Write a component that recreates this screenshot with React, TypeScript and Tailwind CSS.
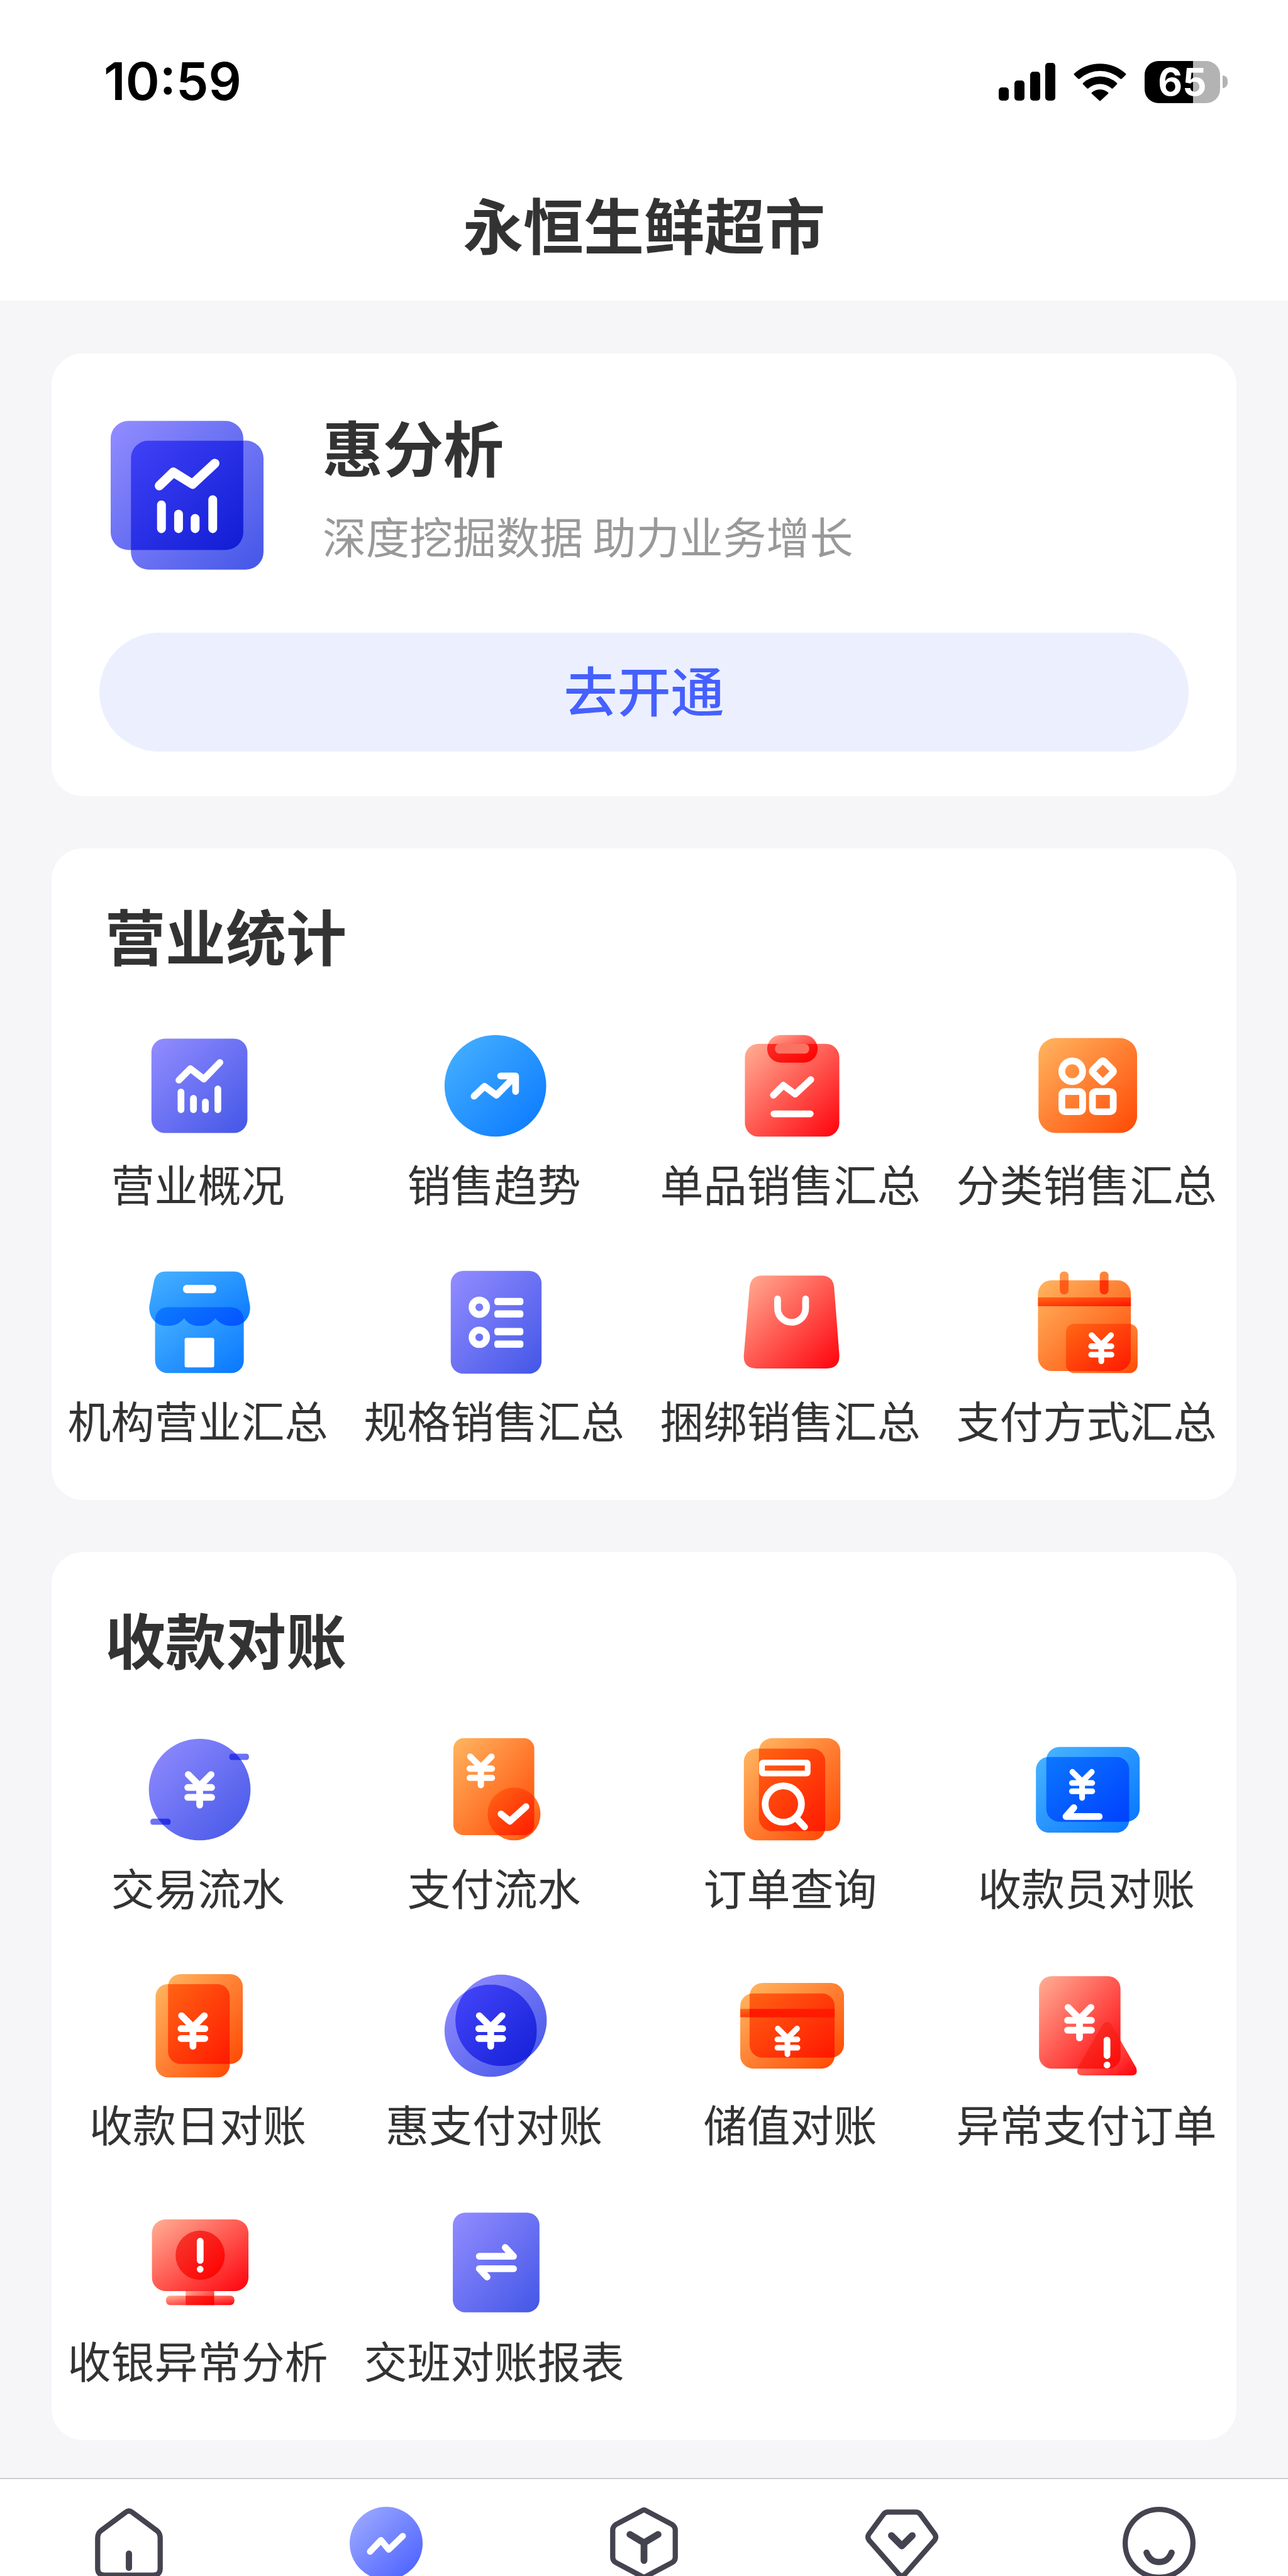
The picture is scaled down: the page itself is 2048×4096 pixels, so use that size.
import type { ReactNode } from "react";

type Tone = "purple" | "blue" | "orange" | "red";

const gradients = [
  { id: "purple", from: "#8f8afe", to: "#4759e8" },
  { id: "blue", from: "#45b0ff", to: "#0b7aff" },
  { id: "orange", from: "#ffb05c", to: "#ff4e08" },
  { id: "red", from: "#ffa78f", to: "#ff0a12" },
  { id: "purple-deep", from: "#4646fa", to: "#131fd6" },
  { id: "blue-deep", from: "#0c78ff", to: "#0040ff" },
  { id: "orange-deep", from: "#ff6414", to: "#ff1700" },
  { id: "red-deep", from: "#f5382e", to: "#ff0000" },
  { id: "tab", from: "#9eabff", to: "#4a60ff" },
];

const GradientDefs = () => (
  <svg width="0" height="0" className="absolute" aria-hidden="true">
    <defs>
      {gradients.map((g) => (
        <linearGradient key={g.id} id={g.id} x1="0" y1="0" x2="1" y2="1">
          <stop offset="0.05" stopColor={g.from} />
          <stop offset="0.95" stopColor={g.to} />
        </linearGradient>
      ))}
    </defs>
  </svg>
);

const Icon = ({ children }: { children: ReactNode }) => (
  <svg viewBox="0 0 200 200" className="w-[165px] h-[165px] overflow-visible" fill="none" aria-hidden="true">
    {children}
  </svg>
);

const White = ({ d, w = 13 }: { d: string; w?: number }) => (
  <path d={d} stroke="#fff" strokeWidth={w} strokeLinecap="round" strokeLinejoin="round" />
);

// x is the middle of the sign, y its top edge
const Yen = ({ x, y, s = 1 }: { x: number; y: number; s?: number }) => (
  <g transform={`translate(${x} ${y}) scale(${s})`}>
    <White d="M-22 7 0 29 22 7M0 29V66M-23 32H23M-23 51H23" />
  </g>
);

// two stacked shapes, with the part they share in the deep tone
const Duo = ({ id, tone, back, front }: { id: string; tone: Tone; back: string; front: string }) => (
  <>
    <clipPath id={id}>
      <path d={front} />
    </clipPath>
    <path d={back} fill={`url(#${tone})`} />
    <path d={front} fill={`url(#${tone})`} />
    <path d={back} fill={`url(#${tone}-deep)`} clipPath={`url(#${id})`} />
  </>
);

const box = (x: number, y: number, w: number, h: number, r: number) =>
  `M${x + r} ${y}h${w - 2 * r}a${r} ${r} 0 0 1 ${r} ${r}v${h - 2 * r}a${r} ${r} 0 0 1 ${-r} ${r}h${2 * r - w}a${r} ${r} 0 0 1 ${-r} ${-r}v${2 * r - h}a${r} ${r} 0 0 1 ${r} ${-r}z`;

const disc = (cx: number, cy: number, r: number) =>
  `M${cx - r} ${cy}a${r} ${r} 0 1 1 ${2 * r} 0a${r} ${r} 0 1 1 ${-2 * r} 0z`;

const businessItems = [
  {
    name: "营业概况",
    icon: (
      <Icon>
        <path d={box(7, 9, 185, 182, 26)} fill="url(#purple)" />
        <White d="M60 89 82 67 108 87 139 55" />
        <White d="M64 112V146M88 124V146M111 131V146M135 106V146" />
      </Icon>
    ),
  },
  {
    name: "销售趋势",
    icon: (
      <Icon>
        <circle cx="99" cy="100" r="98" fill="url(#blue)" />
        <White d="M58 120 78 101 101 118 138 81M109 81H138V111" />
      </Icon>
    ),
  },
  {
    name: "单品销售汇总",
    icon: (
      <Icon>
        <path d={box(9, 19, 182, 179, 26)} fill="url(#red)" />
        <clipPath id="clipboard">
          <path d={box(9, 19, 182, 179, 26)} />
        </clipPath>
        <path d={box(52, 2, 97, 53, 26)} fill="url(#red)" />
        <path
          d={box(52, 2, 97, 53, 26)}
          fill="url(#red-deep)"
          clipPath="url(#clipboard)"
        />
        <path d={box(67, 19, 66, 19, 9)} fill="#fb7263" />
        <White d="M64 118 83 99 106 116 136 88M65 154H135" />
      </Icon>
    ),
  },
  {
    name: "分类销售汇总",
    icon: (
      <Icon>
        <path d={box(4, 8, 190, 183, 33)} fill="url(#orange)" />
        <g stroke="#fff" strokeWidth="13" strokeLinejoin="round">
          <circle cx="69" cy="72" r="20" />
          <path d="M125 53Q128 50 131 53L147 69Q150 72 147 75L131 91Q128 94 125 91L109 75Q106 72 109 69Z" />
          <rect x="49" y="111" width="40" height="39" rx="6" />
          <rect x="108" y="111" width="40" height="39" rx="6" />
        </g>
      </Icon>
    ),
  },
  {
    name: "机构营业汇总",
    icon: (
      <Icon>
        <Duo
          id="store"
          tone="blue"
          back={box(14, 71, 171, 127, 24)}
          front="M34 2H166Q184 2 188 21L197 68C199 92 183 107 163 107Q142 107 130 92Q120 107 100 107Q80 107 70 92Q58 107 37 107C17 107 1 92 3 68L12 21Q16 2 34 2Z"
        />
        <rect x="68" y="28" width="64" height="16" rx="7" fill="#fff" />
        <rect x="71" y="130" width="57" height="57" rx="4" fill="#fff" />
      </Icon>
    ),
  },
  {
    name: "规格销售汇总",
    icon: (
      <Icon>
        <path d={box(13, 1, 175, 198, 24)} fill="url(#purple)" />
        <circle cx="68" cy="71" r="14" stroke="#fff" strokeWidth="13" />
        <circle cx="68" cy="129" r="14" stroke="#fff" strokeWidth="13" />
        <g fill="#fff">
          <rect x="97" y="53" width="56" height="14" rx="5" />
          <rect x="97" y="77" width="56" height="14" rx="5" />
          <rect x="97" y="111" width="56" height="14" rx="5" />
          <rect x="97" y="135" width="56" height="14" rx="5" />
        </g>
      </Icon>
    ),
  },
  {
    name: "捆绑销售汇总",
    icon: (
      <Icon>
        <path
          d="M42 10H156Q179 10 181 33L191 163Q192 189 166 189H32Q5 189 7 163L18 33Q20 10 42 10Z"
          fill="url(#red)"
        />
        <White d="M72 55V73A27 27 0 0 0 126 73V55" />
      </Icon>
    ),
  },
  {
    name: "支付方式汇总",
    icon: (
      <Icon>
        <path d={box(45, 2, 17, 44, 8)} fill="#ff994b" />
        <path d={box(122, 2, 17, 44, 8)} fill="#ff8238" />
        <Duo id="calendar" tone="orange" back={box(57, 103, 138, 95, 16)} front={box(3, 19, 179, 175, 26)} />
        <rect x="3" y="52" width="179" height="17" fill="url(#orange-deep)" />
        <path d="M45 19H62V38A8 8 0 0 1 45 38Z" fill="#ff5c18" />
        <path d="M122 19H139V38A8 8 0 0 1 122 38Z" fill="#ff3208" />
        <Yen x={125} y={119} s={0.85} />
      </Icon>
    ),
  },
];

const paymentItems = [
  {
    name: "交易流水",
    icon: (
      <Icon>
        <Duo
          id="flow"
          tone="purple"
          back={box(157, 31, 38, 12, 5) + box(5, 156, 39, 12, 5)}
          front={disc(100, 100, 98)}
        />
        <Yen x={100} y={64} />
      </Icon>
    ),
  },
  {
    name: "支付流水",
    icon: (
      <Icon>
        <Duo id="pay-flow" tone="orange" back={disc(135, 147, 51)} front={box(18, 1, 156, 187, 20)} />
        <Yen x={71} y={30} s={0.93} />
        <White d="M110 147 127 161 158 133" />
      </Icon>
    ),
  },
  {
    name: "订单查询",
    icon: (
      <Icon>
        <Duo id="order" tone="orange" back={box(36, 1, 157, 179, 25)} front={box(7, 21, 157, 177, 25)} />
        <rect x="42" y="48" width="88" height="21" rx="2" stroke="#fff" strokeWidth="11" />
        <circle cx="83" cy="128" r="35" stroke="#fff" strokeWidth="13" />
        <White d="M109 156 124 172" />
      </Icon>
    ),
  },
  {
    name: "收款员对账",
    icon: (
      <Icon>
        <Duo id="cashier" tone="blue" back={box(19, 18, 180, 144, 25)} front={box(-1, 37, 180, 146, 25)} />
        <Yen x={88} y={60} s={0.85} />
        <White d="M72 135 57 152H121" />
      </Icon>
    ),
  },
  {
    name: "收款日对账",
    icon: (
      <Icon>
        <Duo id="daily" tone="orange" back={box(39, 0, 144, 173, 24)} front={box(15, 19, 143, 180, 24)} />
        <Yen x={87} y={73} />
      </Icon>
    ),
  },
  {
    name: "惠支付对账",
    icon: (
      <Icon>
        <Duo id="hui-pay" tone="purple" back={disc(110, 89, 88)} front={disc(90, 109, 89)} />
        <Yen x={90} y={73} />
      </Icon>
    ),
  },
  {
    name: "储值对账",
    icon: (
      <Icon>
        <Duo id="stored" tone="orange" back={box(18, 17, 182, 144, 25)} front={box(0, 37, 182, 145, 25)} />
        <rect x="0" y="67" width="182" height="16" fill="url(#orange-deep)" />
        <rect x="18" y="67" width="164" height="16" fill="#ff1a00" />
        <Yen x={91} y={99} s={0.84} />
      </Icon>
    ),
  },
  {
    name: "异常支付订单",
    icon: (
      <Icon>
        <Duo
          id="abnormal"
          tone="red"
          back="M127 98Q136 86 145 98L192 180Q197 195 184 195H88Q75 195 80 180Z"
          front={box(5, 4, 157, 178, 24)}
        />
        <Yen x={83} y={57} />
        <White d="M136 127V157M136 175V175.1" />
      </Icon>
    ),
  },
  {
    name: "收银异常分析",
    icon: (
      <Icon>
        <path d={box(8, 17, 186, 138, 26)} fill="url(#red)" />
        <circle cx="101" cy="86" r="47.5" fill="url(#red-deep)" />
        <Duo id="stand" tone="red" back={box(73, 155, 55, 27, 0)} front={box(35, 164, 132, 18, 8)} />
        <White d="M101 59V96M101 113V113.1" />
      </Icon>
    ),
  },
  {
    name: "交班对账报表",
    icon: (
      <Icon>
        <path d={box(17, 4, 167, 192, 24)} fill="url(#purple)" />
        <White d="M68 88H134L118 71M134 112H68L83 128" />
      </Icon>
    ),
  },
];

const tabs = [
  {
    name: "首页",
    icon: (
      <>
        <path d="M63 11Q70 5 77 11L124 46Q130 51 130 60V118Q130 131 117 131H23Q10 131 10 118V60Q10 51 16 46Z" />
        <path d="M70 90V117" strokeWidth="12" />
      </>
    ),
  },
  {
    name: "报表",
    icon: (
      <>
        <circle cx="70" cy="70" r="70" fill="url(#tab)" stroke="none" />
        <path d="M39 86 60 64 75 82 102 56" stroke="#fff" strokeWidth="12" />
      </>
    ),
  },
  {
    name: "商品",
    icon: (
      <>
        <path d="M65 8Q70 4 75 8L124 34Q130 38 130 45V97Q130 104 124 107L75 133Q70 136 65 133L16 107Q10 104 10 97V45Q10 38 16 34Z" />
        <path d="M43 53 70 69 97 53M70 69V103" strokeWidth="13" />
      </>
    ),
  },
  {
    name: "会员",
    icon: (
      <>
        <path d="M43 10H97Q102 10 105 14L133 52Q137 58 133 64L76 129Q70 135 64 129L7 64Q3 58 7 52L35 14Q38 10 43 10Z" />
        <path d="M50 55 70 75 90 55" strokeWidth="13" />
      </>
    ),
  },
  {
    name: "我的",
    icon: (
      <>
        <circle cx="70" cy="70" r="65" />
        <path d="M46 88Q53 106 70 106Q87 106 94 88" strokeWidth="12" />
      </>
    ),
  },
];

const StatusBar = () => (
  <div className="flex items-center justify-between h-[260px] pl-[165px] pr-[96px] text-black font-['Inter',sans-serif]">
    <span className="text-[82px] leading-[100px] font-semibold">10:59</span>
    <div className="flex items-center">
      <svg viewBox="0 0 90 60" className="w-[90px] h-[60px]" aria-hidden="true">
        <rect x="0" y="39" width="16" height="21" rx="5" />
        <rect x="25" y="28" width="16" height="32" rx="5" />
        <rect x="50" y="14" width="16" height="46" rx="5" />
        <rect x="74" y="0" width="16" height="60" rx="5" />
      </svg>
      <svg viewBox="0 0 84 62" className="w-[84px] h-[62px] ml-[29px]" aria-hidden="true">
        <path d="M1 18A61 61 0 0 1 83 18Q84 19 83 20L77 26Q75 27 74 26A48 48 0 0 0 10 26Q9 27 7 26L1 20Q0 19 1 18Z" />
        <path d="M15 33A40 40 0 0 1 69 33Q70 34 69 35L63 41Q61 43 60 41A28 28 0 0 0 24 41Q23 43 21 41L15 35Q14 34 15 33Z" />
        <path d="M29 48A20 20 0 0 1 55 48Q56 49 55 50L43 61Q42 62 41 61L29 50Q28 49 29 48Z" />
      </svg>
      <div className="flex items-center justify-center w-[120px] h-[67px] ml-[29px] rounded-[22px] bg-[linear-gradient(90deg,#000_64%,#b3b3b3_64%)]">
        <span className="text-[60px] leading-[67px] font-bold text-white">65</span>
      </div>
      <div className="w-2 h-[20px] ml-1 rounded-r-full bg-[#b3b3b3]"></div>
    </div>
  </div>
);

const Section = ({ title, items }: { title: string; items: { name: string; icon: ReactNode }[] }) => (
  <section className="bg-white rounded-[50px] pt-[89px] pb-[78px]">
    <h2 className="pl-[85px] text-[96px] leading-[96px] font-bold">{title}</h2>
    <ul className="grid grid-cols-4 gap-y-[89px] mt-[110px]">
      {items.map((item) => (
        <li key={item.name}>
          <a href="#" className="flex flex-col items-center gap-[22px]">
            {item.icon}
            <span className="pr-[6px] text-[69px] leading-[100px] whitespace-nowrap">{item.name}</span>
          </a>
        </li>
      ))}
    </ul>
  </section>
);

const App = () => {
  return (
    <div className="flex flex-col min-h-screen bg-[#f6f6f9] text-[#333] font-['Noto_Sans_CJK_SC',sans-serif]">
      <GradientDefs />

      <header className="bg-white pb-[28px]">
        <StatusBar />
        <h1 className="text-[96px] leading-[190px] font-bold text-center">永恒生鲜超市</h1>
      </header>

      <main className="flex flex-col gap-[83px] px-[82px] pt-[84px] pb-[60px]">
        <section className="bg-white rounded-[50px] px-[76px] pt-[107px] pb-[71px]">
          <div className="flex gap-[94px] pl-[18px]">
            <svg viewBox="0 0 295 287" className="w-[243px] h-[237px]" fill="none" aria-hidden="true">
              <Duo id="analysis" tone="purple" back={box(0, 0, 256, 249, 34)} front={box(39, 38, 256, 249, 34)} />
              <White d="M94 125 121 99 158 122 201 82" w={18} />
              <White d="M98 162V208M131 180V208M163 188V208M197 152V208" w={17} />
            </svg>
            <div className="flex flex-col gap-[54px]">
              <h2 className="text-[96px] leading-[80px] font-bold">惠分析</h2>
              <p className="text-[69px] leading-[96px] text-[#999]">深度挖掘数据 助力业务增长</p>
            </div>
          </div>
          <button
            type="button"
            className="w-full h-[189px] mt-[100px] pb-[12px] rounded-full bg-[#ecf0fe] text-[85px] leading-[100px] font-medium text-[#4560ff]"
          >
            去开通
          </button>
        </section>

        <Section title="营业统计" items={businessItems} />
        <Section title="收款对账" items={paymentItems} />
      </main>

      <nav className="h-[156px] overflow-hidden bg-white border-t-2 border-[#cfcfcf]">
        <ul className="grid grid-cols-5 pt-[44px]">
          {tabs.map((tab) => (
            <li key={tab.name}>
              <a href="#" aria-label={tab.name} className="flex justify-center">
                <svg
                  viewBox="0 0 140 140"
                  className="w-[116px] h-[116px]"
                  fill="none"
                  stroke="#444451"
                  strokeWidth="10"
                  strokeLinecap="round"
                  strokeLinejoin="round"
                >
                  {tab.icon}
                </svg>
              </a>
            </li>
          ))}
        </ul>
      </nav>
    </div>
  );
};

export default App;
